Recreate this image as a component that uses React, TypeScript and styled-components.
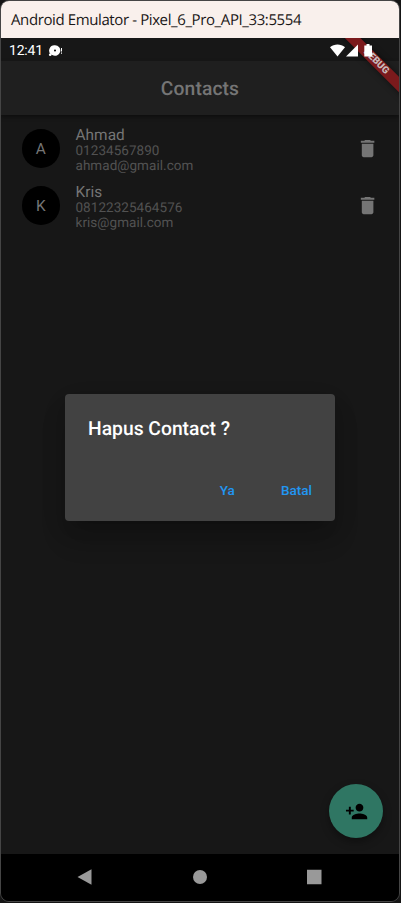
import React from "react";
import styled, { createGlobalStyle } from "styled-components";

const GlobalStyle = createGlobalStyle`
  *, *::before, *::after { box-sizing: border-box; }
  html, body { margin: 0; background: #151515; }
  body { width: 401px; height: 903px; overflow: hidden; font-family: Roboto, "Liberation Sans", sans-serif; text-rendering: geometricPrecision; }
`;

const EmulatorWindow = styled.div`
  position: relative;
  display: flex;
  flex-direction: column;
  width: 400px;
  height: 902px;
  border: 1px solid #454545;
  border-radius: 9px;
  overflow: hidden;
  background: #171717;
`;

const TitleBar = styled.header`
  flex: none;
  display: flex;
  align-items: center;
  height: 37px;
  padding-left: 10px;
  background: #f9f0ec;
  color: #191717;
  font: 400 15px/20px "Open Sans", "Noto Sans", sans-serif;
  letter-spacing: -0.39px;
  white-space: pre;
`;

const Screen = styled.div`
  position: relative;
  flex: 1;
  display: flex;
  flex-direction: column;
  overflow: hidden;
`;

const StatusBar = styled.div`
  position: relative;
  z-index: 3;
  flex: none;
  display: flex;
  align-items: center;
  height: 23px;
  padding: 2px 26.5px 0 8px;
  color: #fff;
  font-size: 14px;
  letter-spacing: -0.2px;
`;

const StatusIcon = styled.svg<{ $gap: number }>`
  display: block;
  flex: none;
  margin-left: ${(p) => p.$gap}px;
`;

const StatusRight = styled.div`
  display: flex;
  margin: -1px 0 0 auto;
`;

const AppBar = styled.div`
  flex: none;
  display: flex;
  align-items: center;
  justify-content: center;
  height: 54px;
  padding-top: 1px;
  background: #1f1f1f;
  box-shadow: 0 2px 4px rgba(0, 0, 0, 0.4);
  color: #757575;
  font-size: 19.3px;
  font-weight: 500;
  letter-spacing: 0.1px;
`;

const RibbonClip = styled.div`
  position: absolute;
  inset: 0 0 auto auto;
  z-index: 2;
  width: 90px;
  height: 90px;
  overflow: hidden;
`;

const Ribbon = styled.div`
  position: absolute;
  top: 18px;
  right: -31.6px;
  width: 110px;
  height: 11.4px;
  transform: rotate(45deg);
  background: #7b1a1c;
  box-shadow: 0 0 6px rgba(0, 0, 0, 0.5);
  color: #c9bcbc;
  font-size: 9.8px;
  font-weight: 900;
  line-height: 12.4px;
  text-align: center;
`;

const ContactList = styled.ul`
  flex: 1;
  margin: 0;
  padding: 5px 20px 0 20.5px;
  list-style: none;
`;

const ContactRow = styled.li`
  display: flex;
  align-items: center;
  height: 57px;
`;

const Avatar = styled.div`
  display: flex;
  align-items: center;
  justify-content: center;
  width: 38.6px;
  height: 38.6px;
  margin-right: 15.4px;
  border-radius: 50%;
  background: #000;
  color: #757575;
  font-size: 15.4px;
`;

const Details = styled.div`
  flex: 1;
  padding-top: 3px;
  color: #525252;
  font-size: 13.5px;
  line-height: 15.5px;
  letter-spacing: 0.05px;
`;

const Name = styled.div`
  color: #757575;
  font-size: 15.4px;
  line-height: 18px;
`;

const Fab = styled.button`
  position: absolute;
  left: 328.4px;
  top: 746.2px;
  display: flex;
  align-items: center;
  justify-content: center;
  width: 54px;
  height: 54px;
  padding: 0;
  border: 0;
  border-radius: 50%;
  background: #2f7663;
  box-shadow: 0 4px 8px rgba(0, 0, 0, 0.35);
`;

const Dialog = styled.div`
  position: absolute;
  left: 64px;
  top: 356px;
  display: flex;
  flex-direction: column;
  justify-content: space-between;
  width: 270px;
  height: 127px;
  padding: 23px 7.7px 7.7px 23px;
  border-radius: 4px;
  background: #424242;
  box-shadow: 0 11px 15px -7px rgba(0, 0, 0, 0.2), 0 20px 28px -2px rgba(0, 0, 0, 0.14), 0 9px 30px -2px rgba(0, 0, 0, 0.08);
`;

const DialogTitle = styled.div`
  color: #fff;
  font-size: 19.3px;
  font-weight: 500;
  line-height: 24px;
`;

const Actions = styled.div`
  display: flex;
  justify-content: flex-end;
  gap: 15.4px;
`;

const ActionButton = styled.button`
  height: 46px;
  padding: 0 15.4px;
  border: 0;
  background: none;
  color: #2196f3;
  font: 500 13.5px/16px Roboto, sans-serif;
  letter-spacing: 0;
`;

const NavigationBar = styled.nav`
  flex: none;
  height: 47px;
  display: flex;
  align-items: center;
  justify-content: center;
  gap: 99.5px;
  padding: 0 1px 2px 0;
  background: #000;
`;

const contacts = [
  { name: "Ahmad", phone: "01234567890", email: "ahmad@gmail.com" },
  { name: "Kris", phone: "08122325464576", email: "kris@gmail.com" },
];

export default function App() {
  return (
    <>
      <GlobalStyle />
      <EmulatorWindow>
        <TitleBar>Android Emulator - Pixel_6_Pro_API_33:5554</TitleBar>
        <Screen>
          <StatusBar>
            12:41
            <StatusIcon $gap={5} width="15" height="12" viewBox="0 0 15 12" fill="#fff">
              <path fillRule="evenodd" d="M7 .2a5.300 5.300 0 1 1-2.800 9.800L3 9.500A5.300 5.300 0 0 1 7 .2zM7 4.400a1.100 1.100 0 1 0 0 2.200 1.100 1.100 0 0 0 0-2.200z" />
              <circle cx="2.200" cy="9.800" r="1.300" />
              <path d="M13 3h1v3.600h-1zM13 7.500h1v1.200h-1z" />
            </StatusIcon>
            <StatusRight>
              <StatusIcon $gap={0} width="15" height="13" viewBox="0 0 15 13" fill="#fff">
                <path d="M7.500 12.500 0 3.200C4.200-.3 10.800-.3 15 3.200z" />
              </StatusIcon>
              <StatusIcon $gap={1} width="12" height="13" viewBox="0 0 12 13" fill="#fff">
                <path d="M0 12.500h12V.5z" />
              </StatusIcon>
              <StatusIcon $gap={6} width="9" height="13" viewBox="0 0 9 13" fill="#fff">
                <path d="M2.500 0h3v1.400H8v11.100H.3V1.400h2.200z" />
              </StatusIcon>
            </StatusRight>
          </StatusBar>
          <AppBar>Contacts</AppBar>
          <RibbonClip>
            <Ribbon>DEBUG</Ribbon>
          </RibbonClip>
          <ContactList>
            {contacts.map((c) => (
              <ContactRow key={c.name}>
                <Avatar>{c.name[0]}</Avatar>
                <Details>
                  <Name>{c.name}</Name>
                  <div>{c.phone}</div>
                  <div>{c.email}</div>
                </Details>
                <svg width="23.200" height="23.200" viewBox="0 0 24 24" fill="#757575">
                  <path d="M6 19c0 1.100.9 2 2 2h8c1.100 0 2-.9 2-2V7H6v12zM19 4h-3.500l-1-1h-5l-1 1H5v2h14V4z" />
                </svg>
              </ContactRow>
            ))}
          </ContactList>
          <NavigationBar>
            <svg width="16" height="16" viewBox="0 0 16 16" fill="#999">
              <path d="M.5 8 14.500.3v15.400z" />
            </svg>
            <svg width="14" height="14" viewBox="0 0 14 14" fill="#999">
              <circle cx="7" cy="7" r="7" />
            </svg>
            <svg width="16" height="16" viewBox="0 0 16 16" fill="#999">
              <path d="M1 .8h14.500v14.500H1z" />
            </svg>
          </NavigationBar>
          <Fab aria-label="Add contact">
            <svg width="23.200" height="23.200" viewBox="0 0 24 24" fill="#000">
              <path d="M15 12c2.210 0 4-1.790 4-4s-1.790-4-4-4-4 1.790-4 4 1.790 4 4 4zm-9-2V7H4v3H1v2h3v3h2v-3h3v-2H6zm9 4c-2.670 0-8 1.340-8 4v2h16v-2c0-2.660-5.330-4-8-4z" />
            </svg>
          </Fab>
          <Dialog role="dialog">
            <DialogTitle>Hapus Contact ?</DialogTitle>
            <Actions>
              <ActionButton>Ya</ActionButton>
              <ActionButton>Batal</ActionButton>
            </Actions>
          </Dialog>
        </Screen>
      </EmulatorWindow>
    </>
  );
}
